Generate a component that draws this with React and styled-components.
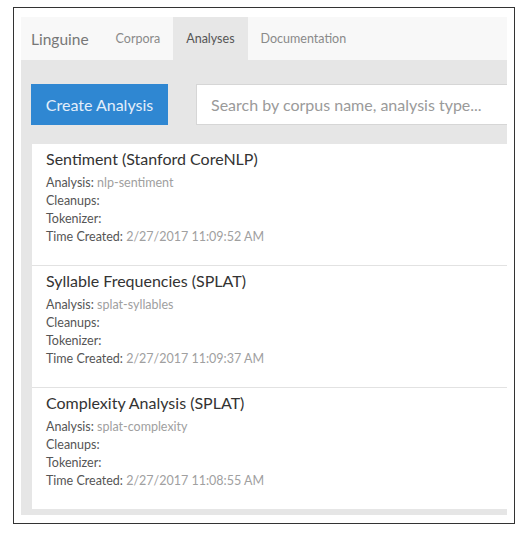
import React from "react";
import styled, { createGlobalStyle } from "styled-components";

const Global = createGlobalStyle`
  html, body { margin: 0; padding: 0; background: #fff; }
  body { font-family: Lato, "Open Sans", sans-serif; }
  * { box-sizing: border-box; }
`;

const Frame = styled.div`
  margin: 7px 0 0 13px;
  width: 502px;
  height: 517px;
  border: 1px solid #333;
  padding: 9px 7px 8px 7px;
  display: flex;
  flex-direction: column;
`;

const Nav = styled.nav`
  display: flex;
  align-items: stretch;
  height: 43px;
  background: #f8f8f8;
`;

const Brand = styled.span`
  display: flex;
  align-items: center;
  padding: 0 14px 0 10px;
  font-size: 15.5px;
  color: #777;
`;

const NavLink = styled.span`
  display: flex;
  align-items: center;
  padding: 0 13px;
  font-size: 12.5px;
  color: ${(p) => (p.$active ? "#555" : "#8a8a8a")};
  background: ${(p) => (p.$active ? "#e7e7e7" : "transparent")};
`;

const Content = styled.main`
  flex: 1;
  background: #e6e6e6;
  padding: 24px 0 0 10px;
  overflow: hidden;
  display: flex;
  flex-direction: column;
  gap: 19px;
`;

const Toolbar = styled.div`
  display: flex;
  gap: 28px;
  height: 41px;
`;

const CreateButton = styled.button`
  flex: none;
  width: 137px;
  height: 41px;
  border: none;
  background: #2f87d2;
  color: #e3eefa;
  font-family: Lato, sans-serif;
  font-size: 16px;
  padding: 0;
`;

const Search = styled.input`
  flex: none;
  width: 340px;
  height: 41px;
  border: 1px solid #d6d6d6;
  background: #fff;
  padding: 0 14px;
  font-family: Lato, sans-serif;
  font-size: 16px;
  &::placeholder { color: #9a9a9a; }
`;

const List = styled.ul`
  list-style: none;
  margin: 0 0 0 1px;
  padding: 0;
  width: 490px;
  background: #fff;
`;

const Item = styled.li`
  padding: 5px 14px 19px;
  border-top: ${(p) => (p.$first ? "none" : "1px solid #e2e2e2")};
`;

const Title = styled.h3`
  margin: 0 0 5px;
  font-size: 16px;
  font-weight: 400;
  color: #333;
  line-height: 20px;
`;

const Meta = styled.div`
  font-size: 12.5px;
  line-height: 18px;
  color: #555;
`;

const Value = styled.span`
  color: #a0a0a0;
`;

const analyses = [
  { title: "Sentiment (Stanford CoreNLP)", analysis: "nlp-sentiment", time: "2/27/2017 11:09:52 AM" },
  { title: "Syllable Frequencies (SPLAT)", analysis: "splat-syllables", time: "2/27/2017 11:09:37 AM" },
  { title: "Complexity Analysis (SPLAT)", analysis: "splat-complexity", time: "2/27/2017 11:08:55 AM" },
];

export default function App() {
  return (
    <>
      <Global />
      <Frame>
        <Nav>
          <Brand>Linguine</Brand>
          <NavLink>Corpora</NavLink>
          <NavLink $active>Analyses</NavLink>
          <NavLink>Documentation</NavLink>
        </Nav>
        <Content>
          <Toolbar>
            <CreateButton>Create Analysis</CreateButton>
            <Search placeholder="Search by corpus name, analysis type..." />
          </Toolbar>
          <List>
            {analyses.map((a, i) => (
              <Item key={a.title} $first={i === 0}>
                <Title>{a.title}</Title>
                <Meta>Analysis: <Value>{a.analysis}</Value></Meta>
                <Meta>Cleanups:</Meta>
                <Meta>Tokenizer:</Meta>
                <Meta>Time Created: <Value>{a.time}</Value></Meta>
              </Item>
            ))}
          </List>
        </Content>
      </Frame>
    </>
  );
}
